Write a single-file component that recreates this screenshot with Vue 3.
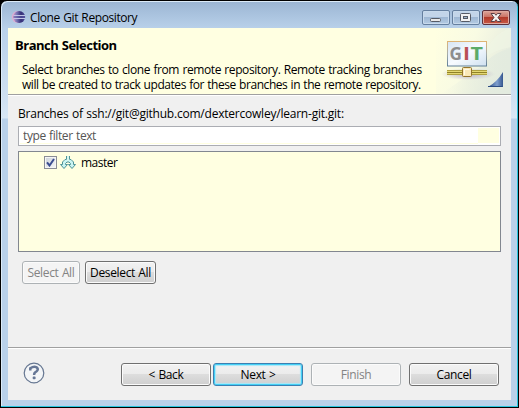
<template>
  <div class="window">
    <header class="titlebar">
      <svg class="app-icon" width="16" height="16" viewBox="0 0 16 16">
        <defs>
          <linearGradient id="orb" x1="0" y1="0" x2="1" y2="0">
            <stop offset="0" stop-color="#c99bc8" />
            <stop offset=".3" stop-color="#7773b4" />
            <stop offset=".65" stop-color="#353078" />
            <stop offset="1" stop-color="#51509a" />
          </linearGradient>
        </defs>
        <circle cx="6.7" cy="8" r="6" fill="#dcaed2" />
        <circle cx="8.2" cy="8" r="6" fill="url(#orb)" />
        <path d="M2.5 6.5h11.5M2.5 9.5h11.5" stroke="#c3c6e6" />
        <path d="M2.5 8h11.5" stroke="#5c5ba5" />
      </svg>
      <h1 class="title">Clone Git Repository</h1>
      <div class="window-controls">
        <button type="button" class="control" aria-label="Minimize">
          <svg width="26" height="13" viewBox="0 0 26 13">
            <rect x="7.5" y="7.5" width="10" height="3" rx="1" fill="#e8e8e8" stroke="#565b65" />
          </svg>
        </button>
        <button type="button" class="control" aria-label="Maximize">
          <svg width="26" height="13" viewBox="0 0 26 13">
            <rect x="7.5" y="2.5" width="10" height="8" rx="1" fill="#f1f1f1" stroke="#565b65" />
            <rect x="10.5" y="5.5" width="4" height="2" fill="#9db3cb" stroke="#565b65" />
          </svg>
        </button>
        <button type="button" class="control close" aria-label="Close">
          <svg width="26" height="13" viewBox="0 0 26 13">
            <path d="M8 2.5h3.500l1.500 1.800 1.500-1.800H18l-3 4 3 4h-3.500L13 8.700l-1.500 1.800H8l3-4z" fill="#f6f2f1" stroke="#5d4146" />
          </svg>
        </button>
      </div>
    </header>

    <main class="dialog">
      <section class="banner">
        <div class="banner-text">
          <h2>Branch Selection</h2>
          <p>Select branches to clone from remote repository. Remote tracking branches</p>
          <p class="line-two">will be created to track updates for these branches in the remote repository.</p>
        </div>
        <svg class="banner-art" width="75" height="66" viewBox="0 0 75 66">
          <defs>
            <linearGradient id="wash" x1="0" y1="0" x2="1" y2=".35">
              <stop offset="0" stop-color="#ffffe1" />
              <stop offset=".5" stop-color="#f9fbe3" />
              <stop offset="1" stop-color="#e6ecdf" />
            </linearGradient>
            <linearGradient id="glow" x1="0" y1="0" x2="1" y2="0">
              <stop offset="0" stop-color="#e3ebdf" stop-opacity="0" />
              <stop offset="1" stop-color="#e3ebdf" />
            </linearGradient>
            <linearGradient id="sign" x1="0" y1="0" x2="1" y2="1">
              <stop offset="0" stop-color="#d7e5f4" />
              <stop offset=".5" stop-color="#f7fbff" />
              <stop offset="1" stop-color="#cfe0f0" />
            </linearGradient>
            <linearGradient id="frame" x1="0" y1="0" x2="0" y2="1">
              <stop offset="0" stop-color="#dfb474" />
              <stop offset=".5" stop-color="#a6adab" />
              <stop offset="1" stop-color="#607f98" />
            </linearGradient>
            <linearGradient id="corner" x1="0" y1="0" x2="1" y2="0">
              <stop offset="0" stop-color="#27487f" />
              <stop offset=".6" stop-color="#7f9fce" />
              <stop offset="1" stop-color="#35568f" />
            </linearGradient>
            <radialGradient id="shade">
              <stop offset="0" stop-color="#b7adc6" />
              <stop offset="1" stop-color="#b7adc6" stop-opacity="0" />
            </radialGradient>
          </defs>
          <rect width="75" height="66" fill="url(#wash)" />
          <path d="M75 0C60 5 52 15 48 30Q61 21 75 19z" fill="#f0f5e4" opacity=".7" />
          <path d="M75 20Q58 24 47 37L5 66h70z" fill="url(#glow)" />
          <ellipse cx="32" cy="46" rx="27" ry="6" fill="url(#shade)" />
          <rect x="11.500" y="13.500" width="39" height="24.500" fill="url(#sign)" stroke="url(#frame)" />
          <g font-family="Open Sans, sans-serif" font-size="17" font-weight="700">
            <text x="13.500" y="32.300" fill="#8d8d8d" textLength="12" lengthAdjust="spacingAndGlyphs">G</text>
            <text x="27" y="32.300" fill="#b94f56" textLength="6.500" lengthAdjust="spacingAndGlyphs">I</text>
            <text x="34.500" y="32.300" fill="#5bab69" textLength="12" lengthAdjust="spacingAndGlyphs">T</text>
          </g>
          <path d="M11 42.500h40M11 46.500h40" stroke="#b0a240" />
          <path d="M11 44.500h40" stroke="#e4d873" stroke-width="3" />
          <path d="M11 44.500h40" stroke="#8f8128" />
          <rect x="26.500" y="39.500" width="9" height="9" rx="1" fill="#f9e8b8" stroke="#94752d" />
          <path d="M28.500 47v-5.500h5" fill="none" stroke="#fffbe7" />
          <path d="M67 44v15H52q9-5 15-15z" fill="url(#corner)" />
          <path d="M52 58.500h14.500" stroke="#2c4c82" />
        </svg>
      </section>

      <section class="content">
        <label class="repo-label" for="filter">Branches of ssh://git@github.com/dextercowley/learn-git.git:</label>
        <div class="filter">
          <input id="filter" v-model="filterText" type="text" placeholder="type filter text" />
          <span class="filter-clear"></span>
        </div>
        <div class="tree">
          <label v-for="branch in visibleBranches" :key="branch.name" class="branch">
            <input v-model="branch.checked" type="checkbox" />
            <span class="checkbox">
              <svg v-if="branch.checked" width="9" height="9" viewBox="0 0 9 9">
                <path d="M1 4.400 3.500 7.500 8 1" fill="none" stroke="#3b4d90" stroke-width="2" />
              </svg>
            </span>
            <svg class="branch-icon" width="16" height="14" viewBox="0 0 16 14">
              <path d="M6.500 0v3.500M9.500 0v3.500" stroke="#4e9397" />
              <path d="M6.500 3.500H5L2.500 6v2.500H.5L4 12.500l3.500-4h-2v-1L7 6h2l1.500 1.500v1h-2l3.500 4 3.500-4h-2V6L11 3.500H9.500" fill="#caf4f2" stroke="#4e9397" />
              <path d="M8 0v5" stroke="#d8f7ee" stroke-width="2" />
            </svg>
            <span class="branch-name">{{ branch.name }}</span>
          </label>
        </div>
        <div class="selection-buttons">
          <button type="button" class="btn select-all" :disabled="allSelected" @click="setAll(true)"><span>Select All</span></button>
          <button type="button" class="btn deselect-all" :disabled="noneSelected" @click="setAll(false)"><span>Deselect All</span></button>
        </div>
      </section>

      <footer class="footer">
        <button type="button" class="help" aria-label="Help">
          <svg width="22" height="22" viewBox="0 0 22 22">
            <circle cx="11" cy="11" r="9.800" fill="#f3f5f7" stroke="#657691" stroke-width="1.200" />
            <path d="M7.300 8.500V6.200Q11 3.700 13.500 5.300C16.300 7.500 13.800 9.300 12.300 10.300Q11 11.200 11.100 13" fill="none" stroke="#667796" stroke-width="2.500" />
            <rect x="9.700" y="14.600" width="2.900" height="2.700" rx=".8" fill="#667796" />
          </svg>
        </button>
        <div class="nav-buttons">
          <button type="button" class="btn"><span>&lt; Back</span></button>
          <button type="button" class="btn next"><span>Next &gt;</span></button>
        </div>
        <button type="button" class="btn finish" disabled><span>Finish</span></button>
        <button type="button" class="btn"><span>Cancel</span></button>
      </footer>
    </main>
  </div>
</template>

<script setup>
import { ref, computed } from 'vue'

const filterText = ref('')
const branches = ref([{ name: 'master', checked: true }])

const visibleBranches = computed(() => branches.value.filter((b) => b.name.includes(filterText.value)))
// an already checked branch leaves nothing more to select
const allSelected = computed(() => branches.value.every((b) => b.checked))
const noneSelected = computed(() => branches.value.every((b) => !b.checked))

function setAll(checked) {
  branches.value.forEach((b) => { b.checked = checked })
}
</script>

<style>
body { margin: 0; background: #000; }
</style>

<style scoped>
* { box-sizing: border-box; }
.window {
  width: 519px;
  height: 408px;
  padding: 0 6px 7px;
  display: flex;
  flex-direction: column;
  border: 1px solid #000;
  border-radius: 7px 7px 0 0;
  box-shadow: inset -1px -1px #28c5df, inset 1px 1px #dcebf8;
  background: linear-gradient(#9bb5d3, #b9d1ea 28px, #d0e1f2 100px, #d8e7f5 117px, #b9d1ea 118px);
  font-family: 'Open Sans', 'Noto Sans', sans-serif;
  font-size: 12px;
  letter-spacing: -0.4px;
  word-spacing: 0.6px;
  color: #000;
}
.titlebar {
  height: 27px;
  flex: none;
  display: flex;
  align-items: flex-start;
  padding: 8px 2px 0 4px;
}
.title {
  margin: 0 auto 0 3px;
  font-size: 12px;
  font-weight: 400;
  line-height: 17px;
}
.window-controls { display: flex; gap: 2px; margin-top: 1px; }
.control {
  width: 28px;
  height: 15px;
  padding: 0;
  border: 1px solid #657f9f;
  border-radius: 2px;
  background: linear-gradient(#c3d5e9 45%, #9fb8d4 50%, #b4cbe3);
  box-shadow: inset 0 0 0 1px #c8daec;
}
.control svg { display: block; }
.close {
  border-color: #5c303c;
  background: linear-gradient(#dda79c, #cb7365 45%, #b23b2b 50%, #c85846);
  box-shadow: inset 0 0 0 1px #dea99f;
}
.dialog {
  flex: 1;
  margin: 0 1px;
  display: flex;
  flex-direction: column;
  background: #f0f0f0;
}
.banner {
  height: 68px;
  flex: none;
  display: flex;
  justify-content: space-between;
  background: #ffffe1;
  border-bottom: 1px solid #fff;
  box-shadow: inset 0 -1px #a0a0a0;
}
.banner-text { padding: 8px 0 0 7px; white-space: nowrap; }
.banner h2 {
  margin: 0 0 8px;
  font-size: 13px;
  line-height: 18px;
  font-weight: 700;
  letter-spacing: -0.5px;
}
.banner p { margin: 0 0 0 7px; line-height: 15px; }
.banner .line-two { letter-spacing: -0.45px; }
.content { flex: 1; padding: 9px 10px 0; }
.repo-label {
  display: block;
  height: 21px;
  line-height: 18px;
  letter-spacing: -0.22px;
}
.filter {
  height: 20px;
  display: flex;
  padding: 1px;
  background: #fff;
  border: 1px solid #abadb3;
}
.filter input {
  flex: 1;
  min-width: 0;
  padding: 0 3px;
  border: 0;
  border-bottom: 1px solid #ffffe1;
  outline: 0;
  font: inherit;
  letter-spacing: -0.4px;
  word-spacing: 0.6px;
}
.filter input::placeholder { color: #555; opacity: 1; }
.filter-clear { width: 21px; height: 15px; background: #ffffe1; }
.tree {
  height: 101px;
  margin-top: 5px;
  padding: 1px 0 0 25px;
  background: #ffffe1;
  border: 1px solid #828790;
}
.branch { display: flex; align-items: center; height: 19px; }
.branch input { position: absolute; opacity: 0; }
.checkbox {
  width: 13px;
  height: 13px;
  display: grid;
  place-items: center;
  border: 1px solid #8a8d95;
  background: linear-gradient(135deg, #cbd2da, #f7f7f7);
  box-shadow: inset 0 0 0 1px #f5f5f5;
}
.branch-icon { margin: 0 5px 0 3px; }
.branch-name { letter-spacing: -0.5px; }
.selection-buttons { display: flex; gap: 5px; padding: 9px 0 0 4px; }
.btn {
  width: 90px;
  height: 23px;
  padding: 0;
  display: flex;
  align-items: center;
  justify-content: center;
  border: 1px solid #707070;
  border-radius: 3px;
  background: linear-gradient(#f2f2f2, #ebebeb 49%, #dddddd 50%, #cfcfcf);
  box-shadow: inset 0 0 0 1px #fbfbfb;
  font: inherit;
  color: #000;
  white-space: nowrap;
  letter-spacing: -0.35px;
  word-spacing: 0.6px;
}
.btn:disabled {
  color: #838383;
  background: #f4f4f4;
  border-color: #adb2b5;
}
.select-all { width: 58px; }
.deselect-all { width: 71px; }
.next {
  border-color: #3c7fb1;
  box-shadow: inset 0 0 0 1px #43cff5, inset 0 0 1px 2px #a8e7f8;
}
.footer {
  height: 53px;
  flex: none;
  display: flex;
  align-items: flex-start;
  border-top: 1px solid #a0a0a0;
  box-shadow: inset 0 1px #fff;
  padding: 15px 12px 0 15px;
}
.help { padding: 0; border: 0; background: none; margin: -1px auto 0 0; }
.help svg { display: block; }
.nav-buttons { display: flex; gap: 2px; }
.finish { margin: 0 8px; }
</style>
